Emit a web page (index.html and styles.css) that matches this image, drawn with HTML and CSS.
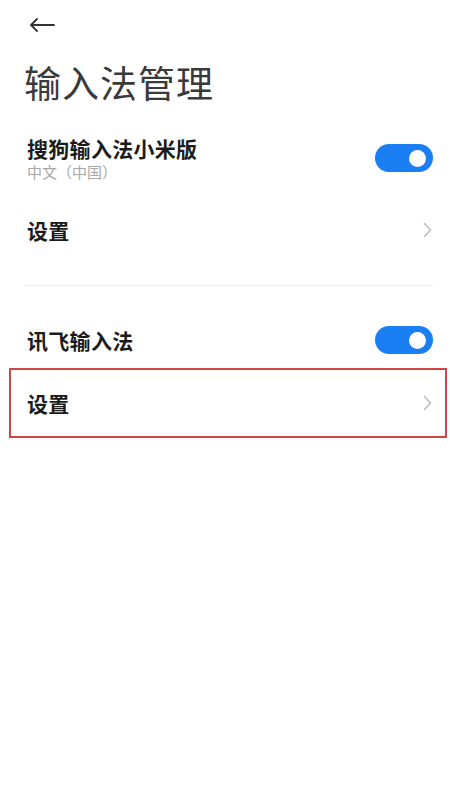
FILE: index.html
```html
<!DOCTYPE html>
<html lang="zh-CN">
<head>
<meta charset="utf-8">
<title>输入法管理</title>
<link rel="stylesheet" href="styles.css">
</head>
<body>
<div class="page">
  <header class="topbar">
    <svg class="back" width="26" height="14" viewBox="0 0 26 14" aria-hidden="true">
      <path d="M25 7H2M8 1L2 7L8 13" fill="none" stroke="#333" stroke-width="1.8" stroke-linecap="round" stroke-linejoin="round"/>
    </svg>
  </header>
  <h1 class="title">输入法管理</h1>

  <div class="row row-main">
    <div class="labels">
      <div class="label">搜狗输入法小米版</div>
      <div class="sub">中文（中国）</div>
    </div>
    <div class="toggle"><span class="knob"></span></div>
  </div>
  <div class="row row-link">
    <div class="label">设置</div>
    <svg class="chev" width="9" height="16" viewBox="0 0 9 16" aria-hidden="true">
      <path d="M1.5 1.5L7.5 8L1.5 14.5" fill="none" stroke="#bdbdbd" stroke-width="1.5" stroke-linecap="round" stroke-linejoin="round"/>
    </svg>
  </div>

  <div class="divider-wrap"><div class="divider"></div></div>

  <div class="row row-main2">
    <div class="label">讯飞输入法</div>
    <div class="toggle"><span class="knob"></span></div>
  </div>
  <div class="row row-link highlight">
    <div class="label">设置</div>
    <svg class="chev" width="9" height="16" viewBox="0 0 9 16" aria-hidden="true">
      <path d="M1.5 1.5L7.5 8L1.5 14.5" fill="none" stroke="#bdbdbd" stroke-width="1.5" stroke-linecap="round" stroke-linejoin="round"/>
    </svg>
  </div>
</div>
</body>
</html>
```

FILE: styles.css
```css
* { box-sizing: border-box; }
html, body {
  margin: 0;
  padding: 0;
  background: #ffffff;
}
body {
  font-family: "Noto Sans CJK SC", "Noto Sans", sans-serif;
  color: #1a1a1a;
}
.page {
  width: 450px;
  min-height: 800px;
  background: #fff;
}
.topbar {
  height: 50px;
  display: flex;
  align-items: center;
  padding-left: 29px;
}
.back { display: block; }
.title {
  margin: 7px 0 0 0;
  padding-left: 24px;
  font-size: 37px;
  font-weight: 400;
  line-height: 50px;
  color: #3a3a3a;
  letter-spacing: 1px;
}
.row {
  display: flex;
  align-items: center;
  justify-content: space-between;
  padding: 0 17px 0 27px;
}
.row-main { height: 72px; margin-top: 15px; }
.row-link { height: 72px; padding-right: 18px; }
.row-main2 { height: 62px; padding-top: 6px; }
.labels {
  display: flex;
  flex-direction: column;
  gap: 3px;
}
.label {
  font-size: 21px;
  font-weight: 700;
  line-height: 24px;
  color: #1c1c1c;
  letter-spacing: 0.3px;
}
.sub {
  font-size: 15px;
  line-height: 18px;
  color: #a8a8a8;
}
.toggle {
  width: 58px;
  height: 28px;
  border-radius: 14px;
  background: #1a7ff3;
  display: flex;
  align-items: center;
  justify-content: flex-end;
  padding-right: 7px;
}
.knob {
  width: 17px;
  height: 17px;
  border-radius: 50%;
  background: #ffffff;
}
.chev { display: block; }
.divider-wrap {
  padding: 19px 17px 20px 25px;
}
.divider {
  height: 1px;
  background: #f0f0f0;
}
.highlight {
  height: 70px;
  margin: 0 3px 0 9px;
  border: 2px solid #d24545;
  padding: 0 13px 0 16px;
}
```
